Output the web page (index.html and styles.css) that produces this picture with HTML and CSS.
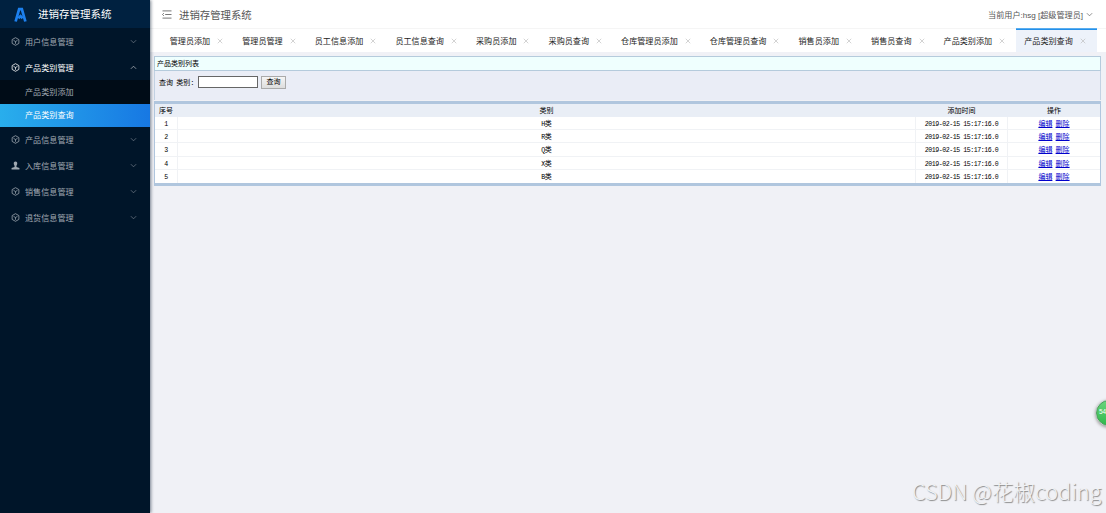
FILE: index.html
```html
<!DOCTYPE html>
<html lang="zh-CN">

<head>
    <meta charset="UTF-8">
    <title>进销存管理系统</title>
    <link rel="stylesheet" href="styles.css">
</head>

<body>
    <svg width="0" height="0" class="symbols">
        <symbol id="cube" viewBox="0 0 16 16">
            <path d="M8 1.2L14 4.6V11.4L8 14.8L2 11.4V4.6Z M4.5 6L8 8L11.5 6 M8 8V12" />
        </symbol>
        <symbol id="down" viewBox="0 0 16 16">
            <path d="M2 5L8 11L14 5" />
        </symbol>
        <symbol id="up" viewBox="0 0 16 16">
            <path d="M2 11L8 5L14 11" />
        </symbol>
        <symbol id="close" viewBox="0 0 16 16">
            <path d="M2 2L14 14M14 2L2 14" />
        </symbol>
    </svg>
    <div class="layout">
        <div class="side">
            <div class="logo">
                <svg class="logo-icon" viewBox="0 0 24 28">
                    <path d="M3 26L9.5 3H14.5L21 26" />
                    <path d="M8 20L12 16L16 20" />
                </svg>
                <span>进销存管理系统</span>
            </div>
            <div class="menu">
                <div class="menu-item"><svg class="menu-icon"><use href="#cube" /></svg><span>用户信息管理</span><svg class="arrow"><use href="#down" /></svg></div>
                <div class="menu-item open"><svg class="menu-icon"><use href="#cube" /></svg><span>产品类别管理</span><svg class="arrow"><use href="#up" /></svg></div>
                <div class="submenu">
                    <div class="submenu-item">产品类别添加</div>
                    <div class="submenu-item active">产品类别查询</div>
                </div>
                <div class="menu-item"><svg class="menu-icon"><use href="#cube" /></svg><span>产品信息管理</span><svg class="arrow"><use href="#down" /></svg></div>
                <div class="menu-item">
                    <svg class="menu-icon solid" viewBox="0 0 16 16"><path d="M8 1C5.5 1 4.5 3 5 5.5C5.2 7 6 8 6.3 8.6V10.5L1 12.5V15H15V12.5L9.7 10.5V8.6C10 8 10.8 7 11 5.5C11.5 3 10.5 1 8 1Z" /></svg>
                    <span>入库信息管理</span><svg class="arrow"><use href="#down" /></svg>
                </div>
                <div class="menu-item"><svg class="menu-icon"><use href="#cube" /></svg><span>销售信息管理</span><svg class="arrow"><use href="#down" /></svg></div>
                <div class="menu-item"><svg class="menu-icon"><use href="#cube" /></svg><span>退货信息管理</span><svg class="arrow"><use href="#down" /></svg></div>
            </div>
        </div>
        <div class="main">
            <div class="header">
                <svg class="fold" viewBox="0 0 10 10"><path d="M0 1H10M3 5H10M0 9H10M1.5 3.5L0 5L1.5 6.5" /></svg>
                <span class="header-title">进销存管理系统</span>
                <span class="user">当前用户:hsg [超级管理员]</span>
                <svg class="user-arrow"><use href="#down" /></svg>
            </div>
            <div class="tabs">
                <div class="tab">管理员添加<svg><use href="#close" /></svg></div>
                <div class="tab">管理员管理<svg><use href="#close" /></svg></div>
                <div class="tab">员工信息添加<svg><use href="#close" /></svg></div>
                <div class="tab">员工信息查询<svg><use href="#close" /></svg></div>
                <div class="tab">采购员添加<svg><use href="#close" /></svg></div>
                <div class="tab">采购员查询<svg><use href="#close" /></svg></div>
                <div class="tab">仓库管理员添加<svg><use href="#close" /></svg></div>
                <div class="tab">仓库管理员查询<svg><use href="#close" /></svg></div>
                <div class="tab">销售员添加<svg><use href="#close" /></svg></div>
                <div class="tab">销售员查询<svg><use href="#close" /></svg></div>
                <div class="tab">产品类别添加<svg><use href="#close" /></svg></div>
                <div class="tab active">产品类别查询<svg><use href="#close" /></svg></div>
            </div>
            <div class="content">
                <div class="panel-title">产品类别列表</div>
                <div class="search">
                    <span>查询 类别:</span>
                    <input type="text" class="search-input">
                    <button class="search-button">查询</button>
                </div>
                <table class="list">
                    <colgroup>
                        <col class="col-no">
                        <col>
                        <col class="col-time">
                        <col class="col-action">
                    </colgroup>
                    <thead>
                        <tr><th>序号</th><th>类别</th><th>添加时间</th><th>操作</th></tr>
                    </thead>
                    <tbody>
                        <tr><td><i>1</i></td><td><i>H</i>类</td><td><i>2019-02-15 15:17:16.0</i></td><td><a href="#">编辑</a> <a href="#">删除</a></td></tr>
                        <tr><td><i>2</i></td><td><i>R</i>类</td><td><i>2019-02-15 15:17:16.0</i></td><td><a href="#">编辑</a> <a href="#">删除</a></td></tr>
                        <tr><td><i>3</i></td><td><i>Q</i>类</td><td><i>2019-02-15 15:17:16.0</i></td><td><a href="#">编辑</a> <a href="#">删除</a></td></tr>
                        <tr><td><i>4</i></td><td><i>X</i>类</td><td><i>2019-02-15 15:17:16.0</i></td><td><a href="#">编辑</a> <a href="#">删除</a></td></tr>
                        <tr><td><i>5</i></td><td><i>B</i>类</td><td><i>2019-02-15 15:17:16.0</i></td><td><a href="#">编辑</a> <a href="#">删除</a></td></tr>
                    </tbody>
                </table>
            </div>
        </div>
    </div>
    <div class="ball">54</div>
    <div class="watermark">CSDN @花椒coding</div>
</body>

</html>
```

FILE: styles.css
```css
body {
    margin: 0;
    height: 513px;
    overflow: hidden;
    background: #f0f1f6;
    font-family: "Liberation Sans", "Noto Sans CJK SC", sans-serif;
    font-size: 8.1px;
}

svg {
    fill: none;
    stroke: currentColor;
    flex: none;
}

.symbols {
    position: absolute;
}

.layout {
    display: flex;
    height: 513px;
}

/* sidebar */
.side {
    width: 150px;
    flex: none;
    background: #001529;
    color: #a0a9b2;
    box-shadow: 1px 0 3px rgba(0, 21, 41, .5);
    z-index: 1;
}

.logo {
    display: flex;
    align-items: center;
    box-sizing: border-box;
    height: 28px;
    padding: 0 0 1px 14px;
    background: #002140;
    color: #fff;
    font-size: 10.5px;
}

.logo-icon {
    width: 13px;
    height: 16px;
    margin: 2px 11px 0 0;
    color: #1c80ee;
    stroke-width: 5;
}

.menu-item {
    display: flex;
    align-items: center;
    box-sizing: border-box;
    height: 26px;
    padding: 0 13px 0 11px;
}

.menu-item.open {
    color: #fff;
}

.menu-icon {
    width: 9px;
    height: 9px;
    margin-right: 5px;
    stroke-width: 1.4;
}

.menu-icon.solid {
    fill: currentColor;
    stroke: none;
}

.arrow {
    width: 7px;
    height: 7px;
    margin-left: auto;
    stroke-width: 1.6;
    opacity: .75;
}

.submenu {
    background: #000c17;
    padding-top: 1px;
    margin-bottom: -1px;
}

.submenu-item {
    height: 23px;
    line-height: 23px;
    padding-left: 25px;
}

.submenu-item.active {
    color: #fff;
    background: linear-gradient(90deg, #29aeec, #1778e3);
}

/* header and tabs */
.main {
    flex: 1;
    min-width: 0;
}

.header {
    display: flex;
    align-items: center;
    box-sizing: border-box;
    height: 29px;
    padding: 0 13px 0 12px;
    background: #fff;
    border-bottom: 1px solid #f5f5f5;
    color: #555;
}

.fold {
    width: 10px;
    height: 9px;
    margin-right: 7px;
    stroke-width: .9;
}

.header-title {
    font-size: 10.4px;
}

.user {
    margin-left: auto;
}

.user-arrow {
    width: 7px;
    height: 7px;
    margin-left: 3px;
    stroke-width: 1.5;
}

.tabs {
    display: flex;
    height: 23px;
    padding-left: 11.7px;
    background: #fff;
    color: #222;
}

.tab {
    display: flex;
    align-items: center;
    padding: 0 10.05px 0 8px;
    white-space: nowrap;
}

.tab svg {
    width: 6px;
    height: 6px;
    margin: 0 1px 0 7px;
    color: #b5b5b5;
    stroke-width: 1.6;
}

.tab.active {
    background: #edf2fa;
    box-shadow: inset 0 1px #2490ea, 0 -1px #5baeef;
}

/* list page */
.content {
    margin: 4px 5px 0 4px;
    font-family: "Liberation Mono", "Noto Sans CJK SC", monospace;
    font-size: 7px;
    color: #000;
}

.panel-title {
    height: 13px;
    line-height: 14px;
    padding-left: 2px;
    background: #effffe;
    border: 1px solid #b5cbdc;
}

.search {
    display: flex;
    height: 24px;
    padding: 5px 4px 0;
    background: #eaedf6;
    border: 1px solid #c3d2e3;
    border-width: 0 1px;
}

.search span {
    line-height: 14px;
    width: 39px;
    white-space: nowrap;
    word-spacing: -1px;
}

.search-input {
    box-sizing: border-box;
    width: 60px;
    height: 12px;
    padding: 0 2px;
    border: 1px solid #666;
    background: #fff;
    font-size: 7px;
}

.search-button {
    width: 25px;
    height: 13px;
    margin-left: 3px;
    padding: 0;
    border: 1px solid #aaa;
    background: linear-gradient(#f5f5f5, #ddd);
    font: inherit;
    line-height: 11px;
}

.list {
    width: 100%;
    table-layout: fixed;
    border-collapse: separate;
    border-spacing: 0;
    border: 1px solid #b0c6de;
    border-width: 3px 1px;
    margin-top: 1px;
    background: #fff;
    text-align: center;
}

.col-no {
    width: 23px;
}

.col-time {
    width: 92px;
}

.col-action {
    width: 92px;
}

.list th,
.list td {
    box-sizing: border-box;
    height: 13px;
    padding: 1px 0 0;
    line-height: 10px;
    border-bottom: 1px solid #f0f2f5;
    border-right: 1px solid #f0f2f5;
}

.list tr:nth-child(3) td {
    height: 14px;
}

.list th {
    padding-top: 2px;
    background: #e9eef6;
    border-color: #e9eef6;
    font-weight: normal;
}

.list th:last-child,
.list td:last-child {
    border-right: 0;
}

.list tr:last-child td {
    border-bottom: 0;
}

.list i {
    font-style: normal;
    font-size: 6.6px;
    line-height: 1;
    letter-spacing: -.45px;
}

.list td a {
    color: #0000cc;
}

.list td a + a {
    margin-left: -1px;
}

/* floating ball */
.ball {
    position: absolute;
    left: 1096px;
    top: 400px;
    box-sizing: border-box;
    width: 26px;
    height: 26px;
    padding-left: 2px;
    line-height: 22px;
    border: 1px solid #4a9c5c;
    border-radius: 50%;
    background: linear-gradient(#6bd47c, #2fb94c);
    box-shadow: 0 1px 3px 1px #aaa;
    color: #fff;
    font-size: 6.5px;
}

.watermark {
    position: absolute;
    left: 912px;
    top: 476px;
    line-height: 30px;
    font-family: "Noto Sans CJK SC", sans-serif;
    font-weight: 300;
    font-size: 21.6px;
    white-space: nowrap;
    color: #f1f2f4;
    text-shadow: 1px 1px 1px #888;
}
```
